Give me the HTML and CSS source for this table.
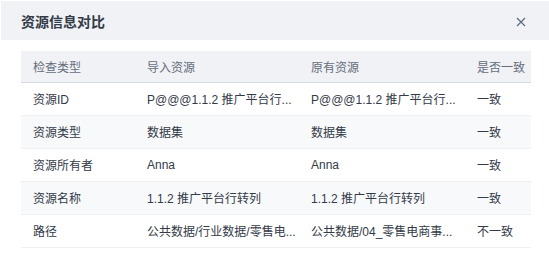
FILE: index.html
```html
<!DOCTYPE html>
<html lang="zh">
<head>
<meta charset="utf-8">
<title>资源信息对比</title>
<link rel="stylesheet" href="styles.css">
</head>
<body>
<div class="dialog">
  <div class="dialog-header">
    <span class="dialog-title">资源信息对比</span>
    <button class="close" aria-label="关闭">
      <svg width="10" height="10" viewBox="0 0 10 10"><path d="M1 1L9 9M9 1L1 9" stroke="#5c6b85" stroke-width="1.2" fill="none"/></svg>
    </button>
  </div>
  <div class="dialog-body">
    <table class="compare">
      <colgroup>
        <col class="c1"><col class="c2"><col class="c3"><col class="c4">
      </colgroup>
      <thead>
        <tr><th>检查类型</th><th>导入资源</th><th>原有资源</th><th>是否一致</th></tr>
      </thead>
      <tbody>
        <tr><td>资源ID</td><td>P@@@1.1.2 推广平台行...</td><td>P@@@1.1.2 推广平台行...</td><td>一致</td></tr>
        <tr class="alt"><td>资源类型</td><td>数据集</td><td>数据集</td><td>一致</td></tr>
        <tr><td>资源所有者</td><td>Anna</td><td>Anna</td><td>一致</td></tr>
        <tr class="alt"><td>资源名称</td><td>1.1.2 推广平台行转列</td><td>1.1.2 推广平台行转列</td><td>一致</td></tr>
        <tr><td>路径</td><td>公共数据/行业数据/零售电...</td><td>公共数据/04_零售电商事...</td><td>不一致</td></tr>
      </tbody>
    </table>
  </div>
</div>
</body>
</html>
```

FILE: styles.css
```css
html, body {
  margin: 0;
  padding: 0;
  background: #ffffff;
}
body {
  padding: 1px 0 0 1px;
  font-family: "Liberation Sans", "Noto Sans CJK SC", sans-serif;
  font-size: 12px;
  color: #333a48;
}
.dialog {
  width: 550px;
  background: #ffffff;
}
.dialog-header {
  height: 39px;
  background: #f0f2f5;
  display: flex;
  align-items: center;
  justify-content: space-between;
  padding: 0 20px;
  box-sizing: border-box;
}
.dialog-title {
  font-size: 14px;
  font-weight: bold;
  color: #333a48;
}
.close {
  border: 0;
  background: none;
  padding: 0;
  margin-right: 5px;
  margin-top: 2px;
  width: 10px;
  height: 10px;
  display: flex;
  cursor: pointer;
}
.dialog-body {
  padding: 11px 20px 0 20px;
}
.compare {
  width: 510px;
  border-collapse: collapse;
  table-layout: fixed;
}
.c1 { width: 114px; }
.c2 { width: 164px; }
.c3 { width: 166px; }
.c4 { width: 66px; }
.compare th {
  height: 31px;
  background: #f0f2f5;
  color: #656d7c;
  font-weight: normal;
  text-align: left;
  padding: 0 0 0 12px;
  border-bottom: 1px solid #d7dbe2;
  white-space: nowrap;
}
.compare td {
  height: 31px;
  padding: 0 0 1px 12px;
  border-bottom: 1px solid #eef0f3;
  white-space: nowrap;
}
.compare tr.alt td {
  background: #f8f9fb;
}
```
